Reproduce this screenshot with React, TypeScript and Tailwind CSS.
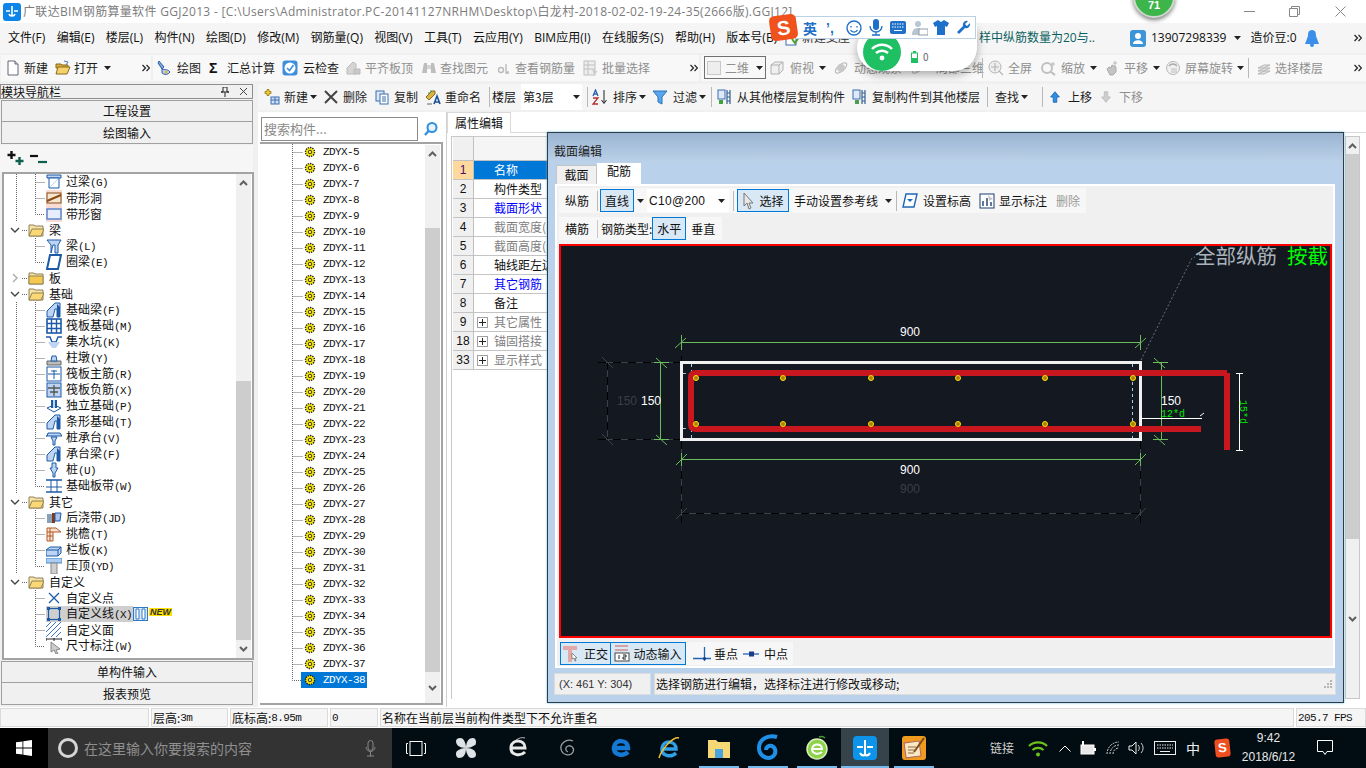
import React from 'react';

type Kids = { children?: React.ReactNode; className?: string };

const Mono = ({ children }: Kids) => (
  <span className="font-['Liberation_Mono',monospace] text-[11px] tracking-[-0.6px]">{children}</span>
);

const Caret = ({ className = '' }: { className?: string }) => (
  <svg width="7" height="4" viewBox="0 0 7 4" className={`shrink-0 ${className}`}>
    <path d="M0 0h7L3.5 4z" fill="#222" />
  </svg>
);

const More = ({ className = '' }: { className?: string }) => (
  <svg width="8" height="8" viewBox="0 0 8 8" className={`shrink-0 ${className}`}>
    <path d="M0.5 1l3 3-3 3M4.5 1l3 3-3 3" fill="none" stroke="#222" strokeWidth="1.2" />
  </svg>
);

const Sep = ({ className = '' }: { className?: string }) => (
  <div className={`w-px h-[20px] bg-[#b8b8b8] shrink-0 ${className}`} />
);

// small toolbar icons, 16 box
const Ic = ({ children, size = 16, className = '' }: Kids & { size?: number }) => (
  <svg width={size} height={size} viewBox="0 0 16 16" className={`shrink-0 ${className}`}>
    {children}
  </svg>
);

const Doc = () => (
  <Ic><path d="M3 1h7l3 3v11H3z" fill="#fff" stroke="#667" /><path d="M10 1v3h3" fill="#dde" stroke="#667" /></Ic>
);
const Open = () => (
  <Ic><path d="M1 4h5l1 1h6v3H1z" fill="#d9a93c" stroke="#8a6a1a" /><path d="M3 7h12l-3 7H1z" fill="#f5d26b" stroke="#8a6a1a" /><path d="M9 1l4 1-2 3" fill="none" stroke="#4a7ab8" /></Ic>
);
const Pencil = () => (
  <Ic><path d="M3 1l5 6-2 2-4-6z" fill="#7fa6d9" stroke="#2d5ea8" /><path d="M6 9c3 1 6 0 8 3-2 3-6 3-8 1z" fill="#b9cff0" stroke="#2d5ea8" /><circle cx="10" cy="12" r="1.5" fill="#e8b33c" /></Ic>
);
const CloudChk = () => (
  <Ic><rect x="0.5" y="0.5" width="15" height="15" rx="3" fill="#3d8fdc" /><circle cx="8" cy="8" r="5.5" fill="#fff" /><path d="M5 8l2.5 2.5L11.5 5" fill="none" stroke="#3d8fdc" strokeWidth="1.6" /></Ic>
);
const GrayAlign = () => (
  <Ic><path d="M1 14V8l6-6 3 2v10z" fill="#d5d5d5" stroke="#bbb" /><path d="M8 9h6v5H8z" fill="#c8c8c8" stroke="#bbb" /></Ic>
);
const Binoc = () => (
  <Ic><path d="M3 3h3v10H1zM10 3h3l2 10h-5z" fill="#bdbdbd" /><rect x="6" y="5" width="4" height="4" fill="#d5d5d5" /></Ic>
);
const RebarGlass = () => (
  <Ic><circle cx="5" cy="10" r="2.5" fill="none" stroke="#bbb" strokeWidth="1.4" /><path d="M10 4v9h3M10 13a2 2 0 002-2" fill="none" stroke="#bbb" strokeWidth="1.4" /></Ic>
);
const Batch = () => (
  <Ic><rect x="1" y="1" width="11" height="14" fill="#eee" stroke="#c0c0c0" /><path d="M1 5h11M1 9h11M5 1v14" stroke="#c0c0c0" /><path d="M9 9l6 3-3 1-1 2z" fill="#ccc" /></Ic>
);
const Cube = () => (
  <Ic><path d="M2 5l4-3h8v8l-4 4H2z" fill="#f0f0f0" stroke="#b0b0b0" /><path d="M2 5h8v9M10 5l4-3" fill="none" stroke="#b0b0b0" /></Ic>
);
const Orbit = () => (
  <Ic><ellipse cx="8" cy="8" rx="7" ry="3" fill="none" stroke="#bbb" strokeWidth="1.3" transform="rotate(-40 8 8)" /><circle cx="8" cy="8" r="4" fill="#c9c9c9" /></Ic>
);
const ZoomIc = () => (
  <Ic><circle cx="7" cy="7" r="6" fill="#eee" stroke="#b5b5b5" /><path d="M7 3v8M3 7h8M11 11l4 4" stroke="#b5b5b5" strokeWidth="1.2" /></Ic>
);
const Zoom2 = () => (
  <Ic><circle cx="6" cy="8" r="5" fill="none" stroke="#c0c0c0" strokeWidth="2" /><path d="M10 12l4 3" stroke="#bbb" strokeWidth="2" /><path d="M12 2v4M10 4h4" stroke="#bbb" /></Ic>
);
const Hand = () => (
  <Ic><path d="M3 9l2-2 2 1 1-3 4 2v5l-3 3H6z" fill="#c4c4c4" stroke="#aaa" /><path d="M11 1v5M9 3h4" stroke="#bbb" /></Ic>
);
const Rotate = () => (
  <Ic><circle cx="8" cy="8" r="6.5" fill="#f0f0f0" stroke="#b8b8b8" /><path d="M4 6a5 5 0 018 0" fill="none" stroke="#aaa" strokeWidth="1.4" /><rect x="6" y="8" width="6" height="5" fill="#d8d8d8" /></Ic>
);
const Floors = () => (
  <Ic><path d="M2 8l6-3h6l-6 3zM2 11l6-3h6l-6 3zM2 14l6-3h6l-6 3z" fill="#e4e4e4" stroke="#b5b5b5" /></Ic>
);
const NewIc = () => (
  <Ic><path d="M3 0.5h2v2h2v2H5v2H3v-2H1v-2h2z" fill="#f0cf4a" stroke="#a88a1a" /><rect x="7" y="8" width="8" height="7" fill="#cfe0f5" stroke="#3a6fb0" /><path d="M7 11h8M11 8v7" stroke="#3a6fb0" /></Ic>
);
const Copy = () => (
  <Ic><rect x="2" y="2" width="8" height="10" fill="#dbe7f7" stroke="#3a6fb0" /><rect x="6" y="5" width="8" height="10" fill="#fff" stroke="#3a6fb0" /><path d="M8 8h4M8 10h4M8 12h4" stroke="#3a6fb0" /></Ic>
);
const Rename = () => (
  <Ic><path d="M1 8l6-6h3v3l-6 6z" fill="#d9b347" stroke="#866a16" /><path d="M3 4h2M5 2h2" stroke="#3a8f3a" /><path d="M9 15l3-8 3 8M10 13h4" fill="none" stroke="#1c4f9c" strokeWidth="1.6" /><path d="M2 15h5" stroke="#666" /></Ic>
);
const SortIc = () => (
  <Ic><path d="M1 7l2.5-6L6 7M2 5h3" fill="none" stroke="#2a5fb0" strokeWidth="1.3" /><path d="M1 9h5l-5 6h5" fill="none" stroke="#b03030" strokeWidth="1.3" /><path d="M12 1v13M9.5 11l2.5 3.5 2.5-3.5" fill="none" stroke="#222" /></Ic>
);
const Funnel = () => (
  <Ic><path d="M1 2h14L10 8v7l-4-2V8z" fill="#57a5ea" stroke="#2b74bd" /></Ic>
);
const FloorCopy = ({ green }: { green?: boolean }) => (
  <Ic>
    <rect x="1" y="1" width="7" height="9" fill="#dfe9f7" stroke="#3a6fb0" />
    <path d="M10 1v14M13 1v14M10 4h3M10 8h3M10 12h3" stroke="#35618f" strokeWidth="1.2" />
    <rect x={green ? 2 : 3} y="11" width="4" height="4" fill={green ? '#3da33d' : '#4c9f4c'} />
  </Ic>
);
const ArrowUp = ({ c, s, down }: { c: string; s: string; down?: boolean }) => (
  <Ic size={14}><path d={down ? 'M8 14l5-6h-3V2H6v6H3z' : 'M8 2l5 6h-3v6H6V8H3z'} fill={c} stroke={s} /></Ic>
);

const Btn = ({ w, icon, label, gray, dd, gap = 'ml-[5px]' }: { w: string; icon?: React.ReactNode; label: string; gray?: boolean; dd?: string; gap?: string }) => (
  <div className={`flex items-center shrink-0 ${w}`}>
    {icon}
    <span className={`${gap} whitespace-nowrap ${gray ? 'text-[#8f8f8f]' : 'text-[#1c1c1c]'}`}>{label}</span>
    {dd && <Caret className={dd} />}
  </div>
);

// ---- connectors and tree icons
const Conn = ({ trunk, last }: { trunk?: boolean; last?: boolean }) => (
  <svg width="42" height="16" className="shrink-0">
    {trunk && <path d="M12.5 0v16" stroke="#666" strokeDasharray="1 1" />}
    <path d={last ? 'M31.5 0v8.5H41' : 'M31.5 0v16M31.5 8.5H41'} fill="none" stroke="#666" strokeDasharray="1 1" />
  </svg>
);

const TreeIc = ({ k }: { k: string }) => {
  const b = '#1c5aa8';
  const l = '#bcd4f2';
  switch (k) {
    case 'gl':
      return <Ic><path d="M1 1h14v3H1z" fill={l} stroke={b} /><path d="M3 4h10v10H3z" fill="#fff" stroke={b} /><path d="M4 13l8-8" stroke={l} /></Ic>;
    case 'dong':
      return <Ic><rect x="0" y="0" width="16" height="16" fill="#f8dcd4" /><rect x="1" y="3" width="14" height="10" fill="#f6e5cf" stroke="#8a4a16" /><path d="M1 11l14-6" stroke="#8a4a16" strokeWidth="2" /></Ic>;
    case 'chuang':
      return <Ic><rect x="0" y="0" width="16" height="16" fill="#f8dcd4" /><rect x="1" y="3" width="14" height="10" fill="#e6eefb" stroke="#5c84cc" strokeWidth="1.5" /></Ic>;
    case 'liang':
      return <Ic><path d="M1 2h14l-3 5v8H9V7H7L5 15V7z" fill={l} stroke={b} /></Ic>;
    case 'quan':
      return <Ic><path d="M4 1h11l-3 14H1z" fill="#fff" stroke={b} strokeWidth="2" /></Ic>;
    case 'jcl':
      return <Ic><path d="M1 15V9l8-8h5v14h-3V7H9l-2 8z" fill={l} stroke={b} /><path d="M11 2l3 3v10h-3z" fill={b} /></Ic>;
    case 'fb':
      return <Ic><rect x="1" y="1" width="14" height="14" fill="#fff" stroke={b} strokeWidth="1.6" /><path d="M1 5.5h14M1 10.5h14M5.5 1v14M10.5 1v14" stroke={b} strokeWidth="1.4" /></Ic>;
    case 'jsk':
      return <Ic><path d="M0 3h4l2 5h4l2-5h4" fill="none" stroke={b} strokeWidth="1.4" /><path d="M2 8l4 6h4l4-6" fill={l} /></Ic>;
    case 'zd':
      return <Ic><path d="M1 11h14v4H1z" fill="#bbb" stroke="#666" /><path d="M5 11l1-5h4l1 5z" fill={l} stroke={b} /></Ic>;
    case 'zj':
      return <Ic><rect x="1" y="1" width="14" height="14" fill="#fff" stroke={b} /><path d="M2 8h12M8 4v9M5 5h6" stroke={b} /></Ic>;
    case 'fj':
      return <Ic><rect x="1" y="1" width="14" height="14" fill={l} stroke={b} /><path d="M2 6h12M8 3v11M4 10h8" stroke="#555" strokeWidth="1.3" /></Ic>;
    case 'dl':
      return <Ic><path d="M1 10l7-3 7 3-7 4z" fill="#fff" stroke={b} /><path d="M5 2h6v8H5z" fill={b} /><path d="M7 2h2v8H7z" fill={l} /></Ic>;
    case 'cd':
      return <Ic><path d="M0 6h1l1-3h12l2 3H0z" fill={l} stroke={b} /><path d="M5 7h6l-2 4v4H7v-4z" fill={l} stroke={b} /></Ic>;
    case 'zh':
      return <Ic><path d="M6 1h4v5h2l-3 5v4H7v-4L4 6h2z" fill={l} stroke={b} /></Ic>;
    case 'bd':
      return <Ic><path d="M0 2h16M0 14h16" stroke={b} strokeWidth="1.5" /><path d="M5 2v12M11 2v12M0 9h16" stroke={b} /></Ic>;
    case 'hjd':
      return <Ic><path d="M1 4h5v9H1z" fill="#8a9fb8" /><path d="M6 3h3v10H6z" fill="#8a3a12" /><path d="M9 3h6l-1 8H9z" fill="#a9c4ee" stroke={b} /></Ic>;
    case 'ty':
      return <Ic><path d="M1 2h9l5 4H7v9H1z" fill="#f9e0cf" stroke="#b05a28" /><path d="M1 6h6M1 10h6M4 2v13" stroke="#b05a28" /></Ic>;
    case 'lb':
      return <Ic><path d="M0 8l4-3h11v6l-3 3H0z" fill={l} stroke={b} /><path d="M0 8h12v6M12 8l3-3" fill="none" stroke={b} /></Ic>;
    case 'yd':
      return <Ic><rect x="0" y="0" width="16" height="5" fill="#a9cdf3" stroke="#4a88cf" /><rect x="5" y="5" width="6" height="11" fill="#cfcfcf" stroke="#888" /></Ic>;
    case 'pt':
      return <Ic><path d="M3 3l10 10M13 3L3 13" stroke={b} strokeWidth="1.3" /></Ic>;
    case 'xian':
      return <Ic><rect x="2.5" y="2.5" width="11" height="11" fill="none" stroke={b} strokeWidth="1.2" /><path d="M1 1h3v3H1zM12 1h3v3h-3zM1 12h3v3H1zM12 12h3v3h-3z" fill={b} /></Ic>;
    case 'mian':
      return <Ic><path d="M0 5l5-5M0 10L10 0M0 15L15 0M5 15L15 5M10 15l5-5" stroke="#3f76c4" /></Ic>;
    case 'bz':
      return <Ic><path d="M0 1h16M0 0v3M8 0v3M16 0v3" stroke="#222" /><path d="M5 4l9 7-4 1 2 4-2 0-2-4-3 2z" fill="#ccc" stroke="#888" /></Ic>;
    default:
      return <Ic />;
  }
};

const Folder = ({ open }: { open?: boolean }) => (
  <svg width="16" height="16" viewBox="0 0 16 16" className="shrink-0">
    <path d="M1 3h5l1 1h8v10H1z" fill="#f6e3a6" stroke="#8f8358" />
    {open ? <path d="M4 7h12l-3 7H1z" fill="#fbd776" stroke="#8f8358" /> : <path d="M1 6h14v8H1z" fill="#f5c94f" stroke="#8f8358" />}
  </svg>
);

const leftRows: { t: string; c?: string; k?: string; trunk?: boolean; last?: boolean; group?: 'open' | 'closed'; sel?: boolean }[] = [
  { t: '过梁', c: '(G)', k: 'gl', trunk: true },
  { t: '带形洞', k: 'dong', trunk: true },
  { t: '带形窗', k: 'chuang', trunk: true, last: true },
  { t: '梁', group: 'open' },
  { t: '梁', c: '(L)', k: 'liang' },
  { t: '圈梁', c: '(E)', k: 'quan', last: true },
  { t: '板', group: 'closed' },
  { t: '基础', group: 'open' },
  { t: '基础梁', c: '(F)', k: 'jcl', trunk: true },
  { t: '筏板基础', c: '(M)', k: 'fb', trunk: true },
  { t: '集水坑', c: '(K)', k: 'jsk', trunk: true },
  { t: '柱墩', c: '(Y)', k: 'zd', trunk: true },
  { t: '筏板主筋', c: '(R)', k: 'zj', trunk: true },
  { t: '筏板负筋', c: '(X)', k: 'fj', trunk: true },
  { t: '独立基础', c: '(P)', k: 'dl', trunk: true },
  { t: '条形基础', c: '(T)', k: 'jcl', trunk: true },
  { t: '桩承台', c: '(V)', k: 'cd', trunk: true },
  { t: '承台梁', c: '(F)', k: 'jcl', trunk: true },
  { t: '桩', c: '(U)', k: 'zh', trunk: true },
  { t: '基础板带', c: '(W)', k: 'bd', trunk: true, last: true },
  { t: '其它', group: 'open' },
  { t: '后浇带', c: '(JD)', k: 'hjd', trunk: true },
  { t: '挑檐', c: '(T)', k: 'ty', trunk: true },
  { t: '栏板', c: '(K)', k: 'lb', trunk: true },
  { t: '压顶', c: '(YD)', k: 'yd', trunk: true, last: true },
  { t: '自定义', group: 'open' },
  { t: '自定义点', k: 'pt' },
  { t: '自定义线', c: '(X)', k: 'xian', sel: true },
  { t: '自定义面', k: 'mian' },
  { t: '尺寸标注', c: '(W)', k: 'bz', last: true },
];

const Chev = ({ up }: { up?: boolean }) => (
  <svg width="9" height="6" viewBox="0 0 9 6">
    <path d={up ? 'M1 5l3.5-3.5L8 5' : 'M1 1l3.5 3.5L8 1'} fill="none" stroke="#606060" strokeWidth="2" />
  </svg>
);

const Scroll = ({ top, thumb, className = '' }: { top: string; thumb: string; className?: string }) => (
  <div className={`w-[15px] shrink-0 bg-[#f0f0f0] flex flex-col ${className}`}>
    <div className="h-[17px] flex items-center justify-center shrink-0"><Chev up /></div>
    <div className={`shrink-0 ${top}`} />
    <div className={`shrink-0 bg-[#cdcdcd] ${thumb}`} />
    <div className="flex-1 flex items-center justify-center"><Chev /></div>
  </div>
);

const LeftTree = () => (
  <div className="h-[488px] ml-[2px] mr-[4px] border-2 border-[#a3a3a3] bg-white flex overflow-hidden">
    <div className="flex-1 pt-0">
      {leftRows.map((r) => (
        <div key={r.t + (r.c ?? '') + (r.k ?? '')} className="h-4 flex items-center whitespace-nowrap text-[#111]">
          {r.group ? (
            <>
              <svg width="24" height="16" className="shrink-0">
                <path d="M18 8.5h6" stroke="#666" strokeDasharray="1 1" />
                {r.group === 'open'
                  ? <path d="M7 6l4 4 4-4" fill="none" stroke="#444" strokeWidth="1.4" />
                  : <path d="M9 4l4 4-4 4" fill="none" stroke="#aaa" strokeWidth="1.4" />}
              </svg>
              <Folder open={r.group === 'open'} />
              <span className="ml-[5px]">{r.t}</span>
            </>
          ) : (
            <>
              <Conn trunk={r.trunk} last={r.last} />
              <div className={`flex items-center h-4 ${r.sel ? 'bg-[#cfcfcf] pr-[1px]' : ''}`}>
                <TreeIc k={r.k as string} />
                <span className="ml-[4px]">{r.t}{r.c && <Mono>{r.c}</Mono>}</span>
              </div>
              {r.sel && (
                <>
                  <svg width="15" height="14" viewBox="0 0 15 14" className="shrink-0">
                    <rect x="0.5" y="0.5" width="14" height="13" fill="#dcebfb" stroke="#2f78c8" />
                    <path d="M3 2h3v10H3zM9 2h3v10H9z" fill="#fff" stroke="#2f78c8" />
                  </svg>
                  <span className="ml-[1px] -mt-[5px] px-[1px] bg-[#ffe100] text-[9px] leading-[8px] font-bold text-[#333] italic font-['Liberation_Sans',sans-serif]">NEW</span>
                </>
              )}
            </>
          )}
        </div>
      ))}
    </div>
    <Scroll className="mr-[1px]" top="h-[190px]" thumb="h-[259px]" />
  </div>
);

const Panel = ({ children, className = '' }: Kids) => (
  <div className={`ml-[1px] mr-[5px] flex items-center justify-center bg-[#f0f0f0] border border-[#a0a0a0] ${className}`}>{children}</div>
);

const LeftCol = () => (
  <div className="w-[258px] shrink-0 flex flex-col pt-[2px] bg-[#f0f0f0]">
    <div className="h-[15px] mr-[5px] border border-[#8e8e8e] flex items-center justify-between pr-[4px] text-[12px] leading-[14px]">
      <span>模块导航栏</span>
      <div className="flex items-center gap-[10px]">
        <svg width="8" height="10" viewBox="0 0 8 10"><path d="M2 0h4v5h2H0h2zM4 5v5" fill="none" stroke="#222" /></svg>
        <svg width="9" height="9" viewBox="0 0 9 9"><path d="M1 1l7 7M8 1l-7 7" stroke="#444" /></svg>
      </div>
    </div>
    <Panel className="h-[22px] mt-[1px]">工程设置</Panel>
    <Panel className="h-[22px] border-t-0">绘图输入</Panel>
    <div className="h-[27px] mr-[5px] mt-[1px] flex items-center pl-[7px] gap-[6px] bg-[#f6f6f6]">
      <svg width="17" height="15" viewBox="0 0 17 15"><path d="M4.500 0v8M0.500 4h8" stroke="#111" strokeWidth="2.400" /><path d="M12.500 6v8M8.500 10h8" stroke="#0d5f4f" strokeWidth="2.400" /></svg>
      <svg width="17" height="12" viewBox="0 0 17 12"><path d="M0 3h8" stroke="#111" strokeWidth="2.200" /><path d="M8 9h9" stroke="#0d5f4f" strokeWidth="2.200" /></svg>
    </div>
    <LeftTree />
    <Panel className="h-[22px] mt-[1px]">单构件输入</Panel>
    <Panel className="h-[22px] border-t-0">报表预览</Panel>
  </div>
);

const Gear = () => (
  <svg width="12" height="12" viewBox="0 0 12 12" className="shrink-0">
    <circle cx="6" cy="6" r="4.5" fill="#ffee00" stroke="#222" strokeWidth="1.4" strokeDasharray="1.4 0.9" />
    <circle cx="6" cy="6" r="1.8" fill="none" stroke="#333" />
  </svg>
);

const zdyx = Array.from({ length: 34 }, (_, i) => i + 5);

const MidTree = () => (
  <div className="w-[186px] shrink-0 flex flex-col bg-white">
    <div className="h-[30px] pt-[5px] flex items-start">
      <div className="w-[157px] h-[24px] ml-[1px] border border-[#8c8c8c] bg-white flex items-center pl-[2px] text-[13px] text-[#8a8a8a]">搜索构件...</div>
      <svg width="16" height="16" viewBox="0 0 16 16" className="ml-[5px] mt-[4px]"><circle cx="9" cy="6.5" r="4.5" fill="#e6f2fd" stroke="#2f8fe0" strokeWidth="2" /><path d="M5.5 10L2 14" stroke="#2f8fe0" strokeWidth="2.4" /></svg>
    </div>
    <div className="h-[563px] border-t-2 border-r-2 border-b-2 border-[#a3a3a3] border-l-0 flex overflow-hidden mr-[3px]">
      <div className="flex-1 overflow-hidden">
        {zdyx.map((n) => (
          <div key={n} className="h-4 flex items-center pl-[32px]">
            <svg width="12" height="16" className="shrink-0"><path d={n === 38 ? 'M0.5 0v8.5H11' : 'M0.5 0v16M0.5 8.5H11'} fill="none" stroke="#666" strokeDasharray="1 1" /></svg>
            <div className={`flex items-center h-4 ${n === 38 ? 'bg-[#0078d7] text-white pr-[2px] -ml-[3px] pl-[3px]' : 'text-[#111]'}`}>
              <Gear />
              <span className="ml-[7px] font-['Liberation_Mono',monospace] text-[11px] tracking-[-0.6px]">ZDYX-{n}</span>
            </div>
          </div>
        ))}
      </div>
      <Scroll className="mt-[1px] mr-[1px]" top="h-[66px]" thumb="h-[444px]" />
    </div>
  </div>
);

const propRows: { n: number; t: string; c?: string; plus?: boolean; sel?: boolean }[] = [
  { n: 1, t: '名称', c: 'text-white', sel: true },
  { n: 2, t: '构件类型', c: 'text-[#111]' },
  { n: 3, t: '截面形状', c: 'text-[#0000ff]' },
  { n: 4, t: '截面宽度(mm)', c: 'text-[#808080]' },
  { n: 5, t: '截面高度(mm)', c: 'text-[#808080]' },
  { n: 6, t: '轴线距左边线距离', c: 'text-[#111]' },
  { n: 7, t: '其它钢筋', c: 'text-[#0000ff]' },
  { n: 8, t: '备注', c: 'text-[#111]' },
  { n: 9, t: '其它属性', c: 'text-[#808080]', plus: true },
  { n: 18, t: '锚固搭接', c: 'text-[#808080]', plus: true },
  { n: 33, t: '显示样式', c: 'text-[#808080]', plus: true },
];

const PropTable = () => (
  <div className="flex-1 flex flex-col bg-white">
    <div className="h-[21px] flex items-end shrink-0 border-b border-[#d9d9d9]">
      <div className="w-[64px] h-[21px] bg-white border border-b-0 border-[#d9d9d9] flex items-center justify-center text-[12px] -mb-px">属性编辑</div>
    </div>
    <div className="flex-1 flex pt-[3px] pl-[4px] pb-[8px]">
      <div className="flex-1 border border-[#c8c8c8] border-b-0 pl-px overflow-hidden">
        <div className="h-[24px] flex border-b border-[#c0c0c0]">
          <div className="w-[21px] bg-[#f0f0f0] border-r border-[#c0c0c0]" />
          <div className="flex-1 bg-[#f5f5f5]" />
        </div>
        {propRows.map((r) => (
          <div key={r.n} className="h-[19px] flex border-b border-[#c4c4c4] leading-[18px]">
            <div className={`w-[21px] shrink-0 text-center border-r border-[#c0c0c0] font-['Liberation_Sans',sans-serif] ${r.sel ? 'bg-[#ffd89e] text-[#4a0f6a]' : 'bg-[#f0f0f0] text-[#111]'}`}>{r.n}</div>
            <div className={`flex-1 flex items-center ${r.sel ? 'bg-[#0078d7]' : 'bg-white'} ${r.plus ? 'pl-[3px]' : 'pl-[20px]'} ${r.c}`}>
              {r.plus && (
                <svg width="11" height="11" viewBox="0 0 11 11" className="mr-[6px] shrink-0"><rect x="0.5" y="0.5" width="10" height="10" fill="#fff" stroke="#a0a0a0" /><path d="M2 5.5h7M5.5 2v7" stroke="#222" /></svg>
              )}
              {r.t}
            </div>
          </div>
        ))}
      </div>
      <div className="w-[15px] ml-[4px] mr-[6px] border border-[#c8c8c8] flex">
        <Scroll className="flex-1" top="h-0" thumb="h-[385px]" />
      </div>
    </div>
  </div>
);

// ---- drawing canvas
const Dash = ({ d, c = '#3c424c' }: { d: string; c?: string }) => (
  <>
    <path d={d} fill="none" stroke={c} />
    <path d={d} fill="none" stroke="#000" strokeDasharray="8 7" />
  </>
);

const rebarX = [696, 783, 871, 958, 1045, 1133];

const Drawing = () => {
  const g = '#6cbb5c';
  return (
    <svg viewBox="559 244 773 394" className="w-full h-full block font-['Liberation_Sans',sans-serif]">
      {/* gray shadow dims */}
      <Dash d="M598 362.5H680M598 439.5H680M607.5 362V439" />
      <path d="M602 357l11 11M602 434l11 11" stroke="#3c424c" />
      <Dash d="M681.5 356V361M681.5 441V523M1140.5 441V523M681 513.5H1141" />
      <path d="M676 519l11-11M1135 519l11-11" stroke="#3c424c" />
      <text x="617" y="405" fontSize="12" fill="#3a3f49">150</text>
      <text x="900" y="493" fontSize="12" fill="#3a3f49">900</text>
      {/* green dims */}
      <path d={`M681 342.5H1141M681.5 335V350M675 348l11-10M1140.5 335V350M1135 348l11-10`} stroke={g} fill="none" />
      <path d={`M682 459.5H1141M681.5 453V466M676 465l11-11M1140.5 453V466M1135 465l11-11`} stroke={g} fill="none" />
      <path d={`M660.5 362V439M654 362.5H669M654 439.5H669M656 358l11 10M656 435l11 10`} stroke={g} fill="none" />
      <path d={`M1161.5 362V439M1153 362.5H1168M1153 439.5H1168M1154 358l11 10M1154 435l11 10`} stroke={g} fill="none" />
      <text x="900" y="336" fontSize="12" fill="#fff">900</text>
      <text x="900" y="474" fontSize="12" fill="#fff">900</text>
      <text x="641" y="405" fontSize="12" fill="#fff">150</text>
      <text x="1161" y="405" fontSize="12" fill="#fff">150</text>
      {/* section outline */}
      <rect x="681.5" y="362.5" width="459" height="77" fill="none" stroke="#f0f0f0" strokeWidth="3" />
      <path d="M691.5 364V373M683 373.5H691M691.5 429V439M683 428.5H691M1132.5 364V438" stroke="#a8c8e8" strokeDasharray="3 3" fill="none" />
      {/* rebar */}
      <path d="M1201 429H696Q691 429 691 424V378Q691 373 696 373H1227" fill="none" stroke="#c8171e" strokeWidth="6" />
      <rect x="1224" y="373" width="6" height="77" fill="#c8171e" />
      {rebarX.flatMap((x) => [378, 424].map((y) => (
        <g key={`${x}-${y}`}>
          <circle cx={x} cy={y} r="2.5" fill="#b07c10" stroke="#ffe600" />
        </g>
      )))}
      {/* leader to label */}
      <path d="M1141 360L1192 258L1195 257" fill="none" stroke="#6c727c" strokeDasharray="2 2" />
      <text x="1195" y="264" fontSize="20.500" fill="#a9b2bc" className="font-['Noto_Sans_CJK_SC',sans-serif]">全部纵筋</text>
      <text x="1287" y="264" fontSize="20.500" fill="#00ff00" className="font-['Noto_Sans_CJK_SC',sans-serif]">按截</text>
      {/* hook dims */}
      <path d="M1141 418.500H1202M1200 416l4-3M1141 416v5" stroke="#fff" fill="none" />
      <text x="1161" y="417" fontSize="10" fill="#00e800" className="font-['Liberation_Mono',monospace]">12*d</text>
      <path d="M1239.5 373V450M1236 373.5H1243M1236 450.5H1243" stroke="#fff" fill="none" />
      <text x="1240" y="400" fontSize="10" fill="#00e800" transform="rotate(90 1240 400)" className="font-['Liberation_Mono',monospace]">15*d</text>
    </svg>
  );
};

const BlueBtn = ({ children, className = '' }: Kids) => (
  <div className={`flex items-center justify-center border border-[#0078d7] bg-[#d9e8f5] shrink-0 ${className}`}>{children}</div>
);

const Cursor = () => (
  <svg width="12" height="18" viewBox="0 0 12 18" className="shrink-0"><path d="M1 1v13l3-3 2 6 2-1-2-5h4z" fill="#e8e8e8" stroke="#777" /></svg>
);

const Dialog = () => (
  <div className="absolute left-[547px] top-[132px] w-[797px] h-[571px] border border-[#2f3c44] bg-[#b9d1ea] flex flex-col shadow-[0_0_2px_#58b8e0]">
    <div className="h-[30px] shrink-0 bg-gradient-to-b from-[#9ab4d2] to-[#bcd2e9] flex items-center pl-[6px] pt-[6px] text-[#222]">截面编辑</div>
    <div className="h-[21px] shrink-0 flex items-end pl-[8px]">
      <div className="w-[41px] h-[19px] border border-[#c4c4c4] border-b-0 bg-[#f0f0f0] flex items-center justify-center">截面</div>
      <div className="w-[44px] h-[21px] bg-white flex items-start justify-center">配筋</div>
    </div>
    <div className="h-[484px] shrink-0 ml-[7px] w-[780px] border-2 border-white bg-[#f0f0f0] pl-[2px] flex flex-col">
      <div className="h-[25px] mt-[2px] w-[527px] bg-[#f7f7f7] flex items-center shrink-0">
        <span className="ml-[6px]">纵筋</span>
        <Sep className="ml-[8px]" />
        <BlueBtn className="ml-[2px] w-[34px] h-[23px]">直线</BlueBtn>
        <Caret className="ml-[3px]" />
        <div className="ml-[3px] w-[82px] h-[23px] bg-white flex items-center justify-between pl-[2px] pr-[2px] font-['Liberation_Sans',sans-serif] text-[12px] tracking-[0.3px]">C10@200<Caret className="mr-[2px]" /></div>
        <Sep className="ml-[4px]" />
        <BlueBtn className="ml-[3px] w-[52px] h-[23px] gap-[5px]"><Cursor />选择</BlueBtn>
        <span className="ml-[5px]">手动设置参考线</span>
        <Caret className="ml-[7px]" />
        <Sep className="ml-[4px]" />
        <svg width="16" height="15" viewBox="0 0 16 15" className="ml-[5px]"><path d="M4 1h11l-3 13H1z" fill="#fff" stroke="#1e66b8" strokeWidth="1.4" /><path d="M5 6l3 3 3-3z" fill="#1e66b8" /></svg>
        <span className="ml-[5px]">设置标高</span>
        <svg width="16" height="16" viewBox="0 0 16 16" className="ml-[8px]"><rect x="1" y="1" width="14" height="14" fill="#fff" stroke="#1e3c6e" /><path d="M4 13V8M8 13V5M12 13V9" stroke="#1e3c6e" strokeWidth="1.4" /><path d="M9 2l5 4-4 2z" fill="#c8c8c8" /></svg>
        <span className="ml-[4px]">显示标注</span>
        <span className="ml-[9px] text-[#9a9a9a]">删除</span>
      </div>
      <div className="h-[23px] mt-[4px] w-[163px] bg-[#f7f7f7] flex items-center shrink-0">
        <span className="ml-[6px]">横筋</span>
        <div className="ml-[8px] w-px h-[18px] bg-[#c8c8c8] shrink-0" />
        <span className="ml-[3px]">钢筋类型:</span>
        <BlueBtn className="ml-0 w-[34px] h-[23px]">水平</BlueBtn>
        <span className="ml-[5px]">垂直</span>
      </div>
      <div className="h-[394px] w-[773px] mt-[4px] shrink-0 border-0 bg-[#141820] outline-2 -outline-offset-2 outline-[#ff0000]">
        <Drawing />
      </div>
      <div className="h-[23px] mt-[4px] w-[233px] bg-[#f7f7f7] flex items-center shrink-0 ml-[1px]">
        <BlueBtn className="w-[51px] h-[23px] gap-[3px]">
          <svg width="18" height="17" viewBox="0 0 18 17"><path d="M0 1h14v4H9v12H5V5H0z" fill="#e3a9a9" /><path d="M9 8l5 5-2 0 1 3-1 0-1-3-2 1z" fill="#fff" stroke="#666" strokeWidth="0.7" /></svg>
          正交
        </BlueBtn>
        <BlueBtn className="w-[76px] h-[23px] gap-[3px] -ml-px">
          <svg width="16" height="17" viewBox="0 0 16 17"><path d="M1 1h13M1 5h13" stroke="#d08a8a" strokeWidth="1.4" /><rect x="1" y="8" width="14" height="8" fill="#fff" stroke="#444" /><path d="M5 10v4M9 10h3v2H9v2h3" fill="none" stroke="#222" /></svg>
          动态输入
        </BlueBtn>
        <svg width="18" height="16" viewBox="0 0 18 16" className="ml-[7px]"><path d="M11.5 1v14M0 12.5h18" stroke="#1e66b8" strokeWidth="1.3" /><circle cx="11.5" cy="12.5" r="1.6" fill="#1e3c8a" /></svg>
        <span className="ml-[3px]">垂点</span>
        <svg width="16" height="8" viewBox="0 0 16 8" className="ml-[5px]"><path d="M0 4h16" stroke="#1e66b8" strokeWidth="1.3" /><rect x="6" y="1.5" width="5" height="5" fill="#1e3c8a" /></svg>
        <span className="ml-[5px]">中点</span>
      </div>
    </div>
    <div className="h-[22px] mt-[5px] ml-[6px] flex gap-[3px] shrink-0">
      <div className="w-[97px] bg-[#f0f0f0] border border-[#dcdcdc] flex items-center pl-[4px] text-[11px] text-[#333] font-['Liberation_Sans',sans-serif]">(X: 461 Y: 304)</div>
      <div className="w-[682px] bg-[#f0f0f0] border border-[#dcdcdc] flex items-center justify-between pl-[1px] pr-[2px] text-[#111]">
        选择钢筋进行编辑，选择标注进行修改或移动;
        <svg width="11" height="11" viewBox="0 0 11 11"><path d="M8 1h2v2H8zM5 4h2v2H5zM8 4h2v2H8zM2 7h2v2H2zM5 7h2v2H5zM8 7h2v2H8z" fill="#b5b5b5" /></svg>
      </div>
    </div>
  </div>
);

const Ime = () => (
  <div className="absolute left-[770px] top-[15px] flex items-center z-20">
    <div className="w-[27px] h-[25px] rounded-[5px] bg-[#f0521e] rotate-[-8deg] flex items-center justify-center text-white text-[20px] font-bold font-['Liberation_Sans',sans-serif] z-10">S</div>
    <div className="-ml-[2px] w-[181px] h-[23px] bg-white border border-[#bcd0e4] flex items-center pl-[7px]">
      <span className="text-[14px] font-bold text-[#1e70c8]">英</span>
      <span className="ml-[9px] w-[12px] text-[14px] font-bold text-[#1e70c8] leading-[14px] font-['Liberation_Sans',sans-serif]">’,</span>
      <svg width="16" height="16" viewBox="0 0 16 16" className="ml-[8px]"><circle cx="8" cy="8" r="7" fill="none" stroke="#1e70c8" strokeWidth="1.4" /><path d="M5 6v1.5M11 6v1.5M4.5 10a4 4 0 007 0" fill="none" stroke="#1e70c8" strokeWidth="1.3" /></svg>
      <svg width="14" height="17" viewBox="0 0 14 17" className="ml-[7px]"><rect x="4" y="0" width="6" height="11" rx="3" fill="#1e70c8" /><path d="M1 7a6 6 0 0012 0M7 13v3M3 16h8" fill="none" stroke="#1e70c8" strokeWidth="1.3" /></svg>
      <svg width="16" height="13" viewBox="0 0 16 13" className="ml-[7px]"><rect width="16" height="13" rx="2" fill="#1e70c8" /><path d="M2 3h12M2 6h12" stroke="#fff" strokeDasharray="1.5 1" /><path d="M4 9.5h8" stroke="#fff" /></svg>
      <svg width="16" height="16" viewBox="0 0 16 16" className="ml-[6px]"><circle cx="6" cy="4" r="3" fill="#b9c6d2" /><path d="M0 15c0-6 3-7 6-7s4 2 4 7z" fill="#b9c6d2" /><rect x="7" y="9" width="9" height="6" fill="#fff" stroke="#8d9baa" /></svg>
      <svg width="16" height="15" viewBox="0 0 16 15" className="ml-[5px]"><path d="M5 0l3 2 3-2 5 3-2 4-2-1v9H4V6L2 7 0 3z" fill="#1e70c8" /></svg>
      <svg width="15" height="15" viewBox="0 0 15 15" className="ml-[7px]"><path d="M14 3l-3 3-2-2 3-3a4 4 0 00-5 5L1 12l2 2 6-6a4 4 0 005-5z" fill="#1e70c8" /></svg>
    </div>
  </div>
);

const WifiFloat = () => (
  <div className="absolute left-[857px] top-[25px] w-[120px] h-[46px] bg-white rounded-b-[23px] rounded-tl-[23px] shadow-[0_4px_8px_rgba(0,0,0,0.3)] flex items-center z-10 pl-[6px]">
    <div className="w-[38px] h-[38px] rounded-full bg-[#1fc063] flex items-center justify-center mt-[8px]">
      <svg width="24" height="20" viewBox="0 0 24 20"><path d="M2 7a14 14 0 0120 0M6 11a9 9 0 0112 0" fill="none" stroke="#fff" strokeWidth="2.4" /><circle cx="12" cy="16" r="2.4" fill="#fff" /></svg>
    </div>
    <svg width="7" height="12" viewBox="0 0 7 12" className="ml-[10px] mt-[18px]"><rect x="0.5" y="2" width="6" height="9.5" fill="#fff" stroke="#1fc063" /><rect x="2" y="0" width="3" height="2" fill="#1fc063" /><rect x="0.5" y="7" width="6" height="5" fill="#1fc063" /></svg>
    <span className="ml-[5px] mt-[18px] text-[10px] text-[#666]">0</span>
  </div>
);

const TitleBar = () => (
  <div className="h-[23px] shrink-0 bg-white flex items-center pl-[3px] text-[#7c7c7c]">
    <svg width="18" height="18" viewBox="0 0 18 18" className="shrink-0"><rect width="18" height="18" rx="3" fill="#0d84e8" /><path d="M9 3v10a3 3 0 01-3-2M9 13a3 3 0 003-2M3 8h4M11 8h4" fill="none" stroke="#fff" strokeWidth="1.6" /></svg>
    <span className="ml-[2px] whitespace-nowrap font-['Open_Sans','Noto_Sans_CJK_SC',sans-serif] text-[12px] tracking-[0.32px]">广联达BIM钢筋算量软件 GGJ2013 - [C:\Users\Administrator.PC-20141127NRHM\Desktop\白龙村-2018-02-02-19-24-35(2666版).GGJ12]</span>
    <div className="ml-auto flex items-center">
      <svg width="11" height="11" viewBox="0 0 11 11" className="mr-[34px]"><path d="M0 5.5h11" stroke="#888" /></svg>
      <svg width="11" height="11" viewBox="0 0 11 11" className="mr-[35px]"><path d="M0.5 2.5h8v8h-8zM2.5 2.5v-2h8v8h-2" fill="none" stroke="#888" /></svg>
      <svg width="11" height="11" viewBox="0 0 11 11" className="mr-[20px]"><path d="M0.5 0.5l10 10M10.5 0.5l-10 10" stroke="#888" /></svg>
    </div>
  </div>
);

const MenuBar = () => (
  <div className="h-[30px] shrink-0 bg-[#f5f5f5] flex items-center pl-[8px] text-[#111] font-['Open_Sans','Noto_Sans_CJK_SC',sans-serif] text-[12px]">
    <div className="flex items-center gap-[11.4px] whitespace-nowrap w-[777px] shrink-0">
      {['文件(F)', '编辑(E)', '楼层(L)', '构件(N)', '绘图(D)', '修改(M)', '钢筋量(Q)', '视图(V)', '工具(T)', '云应用(Y)', 'BIM应用(I)', '在线服务(S)', '帮助(H)', '版本号(B)'].map((m) => (
        <span key={m}>{m}</span>
      ))}
    </div>
    <div className="w-[310px] shrink-0 flex items-center justify-between text-[#0b5f62]">
      <span className="flex items-center text-[#333] whitespace-nowrap">
        <svg width="15" height="15" viewBox="0 0 15 15" className="shrink-0"><rect x="1" y="3" width="10" height="11" fill="#fff" stroke="#3a6fb0" /><path d="M7 8l3 4 4-6" fill="none" stroke="#4aa030" strokeWidth="2" /></svg>
        <span className="ml-[2px]">新建支座</span>
      </span>
      <span className="whitespace-nowrap">样中纵筋数量为20与..</span>
    </div>
    <svg width="16" height="17" viewBox="0 0 16 17" className="shrink-0 ml-[35px]"><rect width="16" height="17" rx="3" fill="#3b95d8" /><circle cx="8" cy="6" r="3" fill="#fff" /><path d="M3 14c0-5 10-5 10 0z" fill="#fff" /></svg>
    <span className="ml-[5px]">13907298339</span>
    <Caret className="ml-[8px]" />
    <span className="ml-[9px]">造价豆:0</span>
    <svg width="14" height="17" viewBox="0 0 14 17" className="ml-[8px]"><path d="M7 0c4 0 4 4 4 6l3 8H0l3-8c0-2 0-6 4-6z" fill="#3b8fe8" /><circle cx="7" cy="15" r="2" fill="#3b8fe8" /></svg>
    <More className="ml-auto mr-[4px]" />
  </div>
);

const Toolbar = () => (
  <div className="h-[29px] shrink-0 bg-[#f0f0f0] flex items-center text-[12px]">
    <div className="w-[150px] h-[26px] ml-[1px] bg-[#f8f8f8] flex items-center pl-[4px] shrink-0">
      <Btn w="w-[50px]" icon={<Doc />} label="新建" gap="ml-[3px]" />
      <Btn w="w-[66px]" icon={<Open />} label="打开" gap="ml-[3px]" dd="ml-[6px]" />
      <More className="ml-[21px]" />
    </div>
    <div className="w-[546px] h-[26px] ml-[2px] bg-[#f8f8f8] flex items-center pl-[3px] shrink-0">
      <Btn w="w-[53px]" icon={<Pencil />} label="绘图" />
      <span className="w-[18px] text-[14px] font-bold font-['Liberation_Sans',sans-serif] shrink-0">Σ</span>
      <Btn w="w-[55px]" label="汇总计算" gap="ml-0" />
      <Btn w="w-[64px]" icon={<CloudChk />} label="云检查" />
      <Btn w="w-[75px]" icon={<GrayAlign />} label="平齐板顶" gray gap="ml-[3px]" />
      <Btn w="w-[75px]" icon={<Binoc />} label="查找图元" gray gap="ml-[3px]" />
      <Btn w="w-[87px]" icon={<RebarGlass />} label="查看钢筋量" gray gap="ml-[3px]" />
      <Btn w="w-[80px]" icon={<Batch />} label="批量选择" gray gap="ml-[3px]" />
      <More className="ml-[27px]" />
    </div>
    <div className="flex-1 h-[26px] ml-[2px] bg-[#f8f8f8] flex items-center pl-[3px]">
      <div className="w-[62px] h-[23px] border border-[#707070] flex items-center pl-[2px] text-[#8f8f8f] shrink-0">
        <svg width="14" height="14" viewBox="0 0 14 14"><rect x="0.5" y="0.5" width="13" height="13" fill="#eee" stroke="#c8c8c8" /></svg>
        <span className="ml-[4px]">二维</span>
        <Caret className="ml-[7px]" />
      </div>
      <Btn w="w-[64px] ml-[3px]" icon={<Cube />} label="俯视" gray dd="ml-[5px]" />
      <Btn w="w-[77px]" icon={<Orbit />} label="动态观察" gray />
      <Btn w="w-[72px]" icon={<Orbit />} label="局部三维" gray gap="ml-[10px]" />
      <Sep />
      <Btn w="w-[53px] ml-[5px]" icon={<ZoomIc />} label="全屏" gray gap="ml-[4px]" />
      <Btn w="w-[63px]" icon={<Zoom2 />} label="缩放" gray gap="ml-[4px]" dd="ml-[5px]" />
      <Btn w="w-[61px]" icon={<Hand />} label="平移" gray gap="ml-[4px]" dd="ml-[5px]" />
      <Btn w="w-[83px]" icon={<Rotate />} label="屏幕旋转" gray gap="ml-[4px]" dd="ml-[4px]" />
      <Sep />
      <Btn w="w-[70px] ml-[7px]" icon={<Floors />} label="选择楼层" gray gap="ml-[3px]" />
      <More className="ml-auto mr-[4px]" />
    </div>
  </div>
);

const EditBar = () => (
  <div className="h-[26px] mt-[2px] shrink-0 bg-[#f5f5f5] flex items-center pl-[6px] text-[12px]">
    <Btn w="w-[60px]" icon={<NewIc />} label="新建" gap="ml-[4px]" dd="ml-[2px]" />
    <Btn w="w-[50px]" icon={<svg width="14" height="14" viewBox="0 0 14 14"><path d="M1 1l12 12M13 1L1 13" stroke="#444" strokeWidth="2" /></svg>} label="删除" gap="ml-[5px]" />
    <Btn w="w-[51px]" icon={<Copy />} label="复制" gap="ml-[4px]" />
    <Btn w="w-[64px]" icon={<Rename />} label="重命名" gap="ml-[4px]" />
    <Sep />
    <span className="ml-[2px] shrink-0">楼层</span>
    <div className="ml-[5px] w-[61px] h-[26px] bg-white flex items-center justify-between pl-[2px] pr-[2px] shrink-0">第3层<Caret /></div>
    <Sep className="ml-[5px]" />
    <Btn w="w-[60px] ml-[4px]" icon={<SortIc />} label="排序" gap="ml-[5px]" dd="ml-[2px]" />
    <Btn w="w-[59px]" icon={<Funnel />} label="过滤" dd="ml-[2px]" />
    <Sep />
    <Btn w="w-[135px] ml-[5px]" icon={<FloorCopy green />} label="从其他楼层复制构件" gap="ml-[4px]" />
    <Btn w="w-[135px]" icon={<FloorCopy />} label="复制构件到其他楼层" gap="ml-[4px]" />
    <Sep />
    <Btn w="w-[47px] ml-[7px]" label="查找" gap="ml-0" dd="ml-[2px]" />
    <Sep />
    <div className="w-[5px] shrink-0" />
    <Btn w="w-[51px]" icon={<ArrowUp c="#2f8fe0" s="#1e66b8" />} label="上移" gap="ml-[6px]" />
    <Btn w="w-[50px]" icon={<ArrowUp c="#cfcfcf" s="#bcbcbc" down />} label="下移" gray gap="ml-[6px]" />
  </div>
);

const StatusBar = () => {
  const cell = 'h-full bg-[#f5f5f5] border border-[#dadada] flex items-center pl-[1px] shrink-0 whitespace-nowrap';
  return (
    <div className="h-[21px] shrink-0 bg-white flex gap-[2px] py-px text-[12px] text-[#111]">
      <div className={`${cell} w-[149px]`} />
      <div className={`${cell} w-[77px]`}>层高:<Mono>3m</Mono></div>
      <div className={`${cell} w-[98px]`}>底标高:<Mono>8.95m</Mono></div>
      <div className={`${cell} w-[48px]`}><Mono>0</Mono></div>
      <div className={`${cell} w-[914px]`}>名称在当前层当前构件类型下不允许重名</div>
      <div className={`${cell} flex-1`}><Mono>205.7 FPS</Mono></div>
    </div>
  );
};

const TaskIcon = ({ children, active, bar }: Kids & { active?: boolean; bar?: boolean }) => (
  <div className={`w-[48px] shrink-0 h-full flex items-center justify-center relative ${active ? 'bg-[#37434a]' : ''}`}>
    {children}
    {bar && <div className={`absolute bottom-0 h-[2px] bg-[#76b9ed] ${active ? 'left-0 right-0' : 'left-[4px] right-[4px]'}`} />}
  </div>
);

const Taskbar = () => (
  <div className="h-[40px] shrink-0 bg-[#020d13] flex items-center text-white">
    <div className="w-[48px] h-full bg-black flex items-center justify-center shrink-0">
      <svg width="16" height="16" viewBox="0 0 16 16"><path d="M0 2.3l6.5-.9v6.2H0zM7.3 1.3L16 0v7.6H7.3zM0 8.4h6.5v6.2L0 13.7zM7.3 8.4H16V16l-8.7-1.2z" fill="#fff" /></svg>
    </div>
    <div className="w-[344px] h-full bg-[#333] flex items-center pl-[10px] shrink-0">
      <div className="w-[20px] h-[20px] rounded-full border-[3px] border-[#d5d5d5] shrink-0" />
      <span className="ml-[6px] text-[14px] text-[#8f8f8f] whitespace-nowrap">在这里输入你要搜索的内容</span>
      <svg width="11" height="17" viewBox="0 0 11 17" className="ml-[113px] shrink-0"><rect x="3" y="0.5" width="5" height="10" rx="2.5" fill="none" stroke="#888" /><path d="M1 7a4.5 4.5 0 009 0M5.5 12v4M2 16h7" fill="none" stroke="#888" /></svg>
    </div>
    <div className="flex h-full items-center">
      <TaskIcon>
        <svg width="20" height="15" viewBox="0 0 20 15"><rect x="4" y="0.5" width="12" height="14" fill="none" stroke="#fff" /><path d="M2 2.5H0.5v10H2M18 2.5h1.500v10H18" fill="none" stroke="#fff" /></svg>
      </TaskIcon>
      <div className="w-[2px]" />
      <TaskIcon>
        <svg width="22" height="22" viewBox="0 0 22 22"><g fill="#dde3e6"><path d="M11 11C4 11 1 8 1 4c0-3 5-4 7-2 2 3 3 5 3 9z" /><path d="M11 11c0-7 3-10 7-10 3 0 4 5 2 7-3 2-5 3-9 3z" /><path d="M11 11c7 0 10 3 10 7 0 3-5 4-7 2-2-3-3-5-3-9z" /><path d="M11 11c0 7-3 10-7 10-3 0-4-5-2-7 3-2 5-3 9-3z" /></g></svg>
      </TaskIcon>
      <div className="w-[4px]" />
      <TaskIcon>
        <svg width="22" height="24" viewBox="0 0 22 24"><path d="M3 12h15c0-9-13-9-14-1-1 8 9 10 14 5" fill="none" stroke="#e8e8e8" strokeWidth="3" /><path d="M18 2c-3-1-6 0-9 2" fill="none" stroke="#bbb" /></svg>
      </TaskIcon>
      <div className="w-[2px]" />
      <TaskIcon>
        <svg width="20" height="20" viewBox="0 0 20 20"><path d="M15 3C8 0 2 6 3 11c1 6 9 8 12 3 2-4-2-7-5-6-3 1-3 5 0 6" fill="none" stroke="#9aa0a3" strokeWidth="1.3" /></svg>
      </TaskIcon>
      <div className="w-[5px]" />
      <TaskIcon>
        <svg width="22" height="24" viewBox="0 0 22 24"><path d="M3 12h15c0-9-13-9-14-1-1 8 9 10 14 5" fill="none" stroke="#1478d4" strokeWidth="4.500" /></svg>
      </TaskIcon>
      <TaskIcon>
        <svg width="24" height="24" viewBox="0 0 24 24"><path d="M4 13h15c0-9-13-9-14-1-1 8 9 10 14 5" fill="none" stroke="#2f9fe8" strokeWidth="3.500" /><path d="M22 2c-5-2-17 10-20 20" fill="none" stroke="#f2c230" strokeWidth="1.5" /></svg>
      </TaskIcon>
      <div className="w-[2px]" />
      <TaskIcon bar>
        <svg width="22" height="20" viewBox="0 0 22 20"><path d="M0 2h8l2 2h12v16H0z" fill="#f5d776" /><rect x="7" y="11" width="8" height="9" fill="#4aa3dc" /></svg>
      </TaskIcon>
      <div className="w-px" />
      <TaskIcon bar>
        <svg width="22" height="28" viewBox="0 0 22 28"><path d="M20 3C10 0 2 6 2 14c0 7 7 12 13 9 5-3 4-9 0-11-3-1-6 1-6 4" fill="none" stroke="#1e90e8" strokeWidth="4" /></svg>
      </TaskIcon>
      <div className="w-px" />
      <TaskIcon bar>
        <svg width="22" height="26" viewBox="0 0 22 26"><circle cx="11" cy="14" r="10" fill="#8ed24a" stroke="#d8f0b8" strokeWidth="1.500" /><path d="M6 14h10c0-6-9-6-10 0 0 5 6 6 10 3" fill="none" stroke="#fff" strokeWidth="2" /><path d="M13 2c3-1 5 0 6 1" fill="none" stroke="#4a9a2a" strokeWidth="1.500" /></svg>
      </TaskIcon>
      <TaskIcon bar active>
        <svg width="24" height="24" viewBox="0 0 24 24"><rect width="24" height="24" rx="4" fill="#0d94ea" /><path d="M12 4v15a4 4 0 01-5-2M12 19a4 4 0 005-2M4 11h6M14 11h6" fill="none" stroke="#fff" strokeWidth="2" /></svg>
      </TaskIcon>
      <div className="w-px" />
      <TaskIcon bar>
        <svg width="24" height="24" viewBox="0 0 24 24"><rect width="24" height="24" rx="3" fill="#f09a1e" /><rect x="3" y="6" width="15" height="15" fill="#fbe8c2" stroke="#a66" transform="rotate(-8 10 13)" /><path d="M22 2L12 16" stroke="#7a4a1a" strokeWidth="2" /><path d="M6 11h8M6 14h8M6 17h6" stroke="#8a6a4a" /></svg>
      </TaskIcon>
    </div>
    <div className="ml-[52px] flex items-center shrink-0">
      <span className="text-[12px] text-[#d0d0d0]">链接</span>
      <svg width="20" height="17" viewBox="0 0 20 17" className="ml-[14px]"><path d="M1 6a13 13 0 0118 0M4.500 10a8 8 0 0111 0" fill="none" stroke="#6cc21c" strokeWidth="2.200" /><circle cx="10" cy="14.500" r="2" fill="#6cc21c" /></svg>
      <svg width="12" height="7" viewBox="0 0 12 7" className="ml-[11px]"><path d="M0.5 6.500L6 1l5.500 5.500" fill="none" stroke="#fff" /></svg>
      <svg width="16" height="14" viewBox="0 0 16 14" className="ml-[9px]"><rect x="1" y="4" width="13" height="9" fill="#e8e8e8" stroke="#fff" /><rect x="14" y="7" width="2" height="3" fill="#fff" /><rect x="2" y="0" width="2" height="4" fill="#fff" /></svg>
      <svg width="16" height="14" viewBox="0 0 16 14" className="ml-[10px]"><path d="M1 13a12 12 0 0112-12M4 13a9 9 0 019-9M7 13a6 6 0 016-6" fill="none" stroke="#d5d5d5" strokeDasharray="2 1" /></svg>
      <svg width="16" height="14" viewBox="0 0 16 14" className="ml-[6px]"><path d="M1 5h3l4-4v12l-4-4H1z" fill="none" stroke="#eee" /><path d="M10 4a4 4 0 010 6M13 2a7 7 0 010 10" fill="none" stroke="#ccc" /></svg>
      <svg width="22" height="14" viewBox="0 0 22 14" className="ml-[10px]"><rect x="0.5" y="0.5" width="21" height="13" fill="none" stroke="#eee" /><path d="M3 4h16M3 7h16" stroke="#eee" strokeDasharray="1.500 1" /><path d="M6 10.500h10" stroke="#eee" /></svg>
      <span className="ml-[10px] text-[14px] text-[#eee]">中</span>
      <div className="ml-[15px] w-[15px] h-[18px] rounded-[3px] bg-[#ef4f20] rotate-[-6deg] flex items-center justify-center text-[13px] font-bold font-['Liberation_Sans',sans-serif]">S</div>
    </div>
    <div className="ml-[9px] flex flex-col items-center text-[12px] leading-[19px] text-[#e8e8e8] font-['Liberation_Sans',sans-serif] shrink-0 w-[59px]">
      <span>9:42</span>
      <span className="whitespace-nowrap">2018/6/12</span>
    </div>
    <svg width="16" height="16" viewBox="0 0 16 16" className="ml-[19px] shrink-0"><path d="M0.500 0.500h15v11H10l-2 3-2-3H0.500z" fill="none" stroke="#fff" /></svg>
  </div>
);

export default function App() {
  return (
    <div className="relative w-[1366px] h-[768px] overflow-hidden flex flex-col bg-[#f0f0f0] text-[12px] leading-[16px] text-[#111] font-['Noto_Sans_CJK_SC','Liberation_Sans',sans-serif]">
      <TitleBar />
      <MenuBar />
      <Toolbar />
      <div className="h-[625px] shrink-0 flex">
        <LeftCol />
        <div className="flex-1 flex flex-col min-w-0">
          <EditBar />
          <div className="h-[2px] shrink-0 bg-[#f0f0f0]" />
          <div className="flex-1 flex min-h-0 bg-white">
            <div className="w-[2px] shrink-0 bg-white" />
            <MidTree />
            <div className="w-px shrink-0 bg-[#d0d0d0]" />
            <PropTable />
          </div>
        </div>
      </div>
      <StatusBar />
      <Taskbar />
      <Dialog />
      <WifiFloat />
      <Ime />
      {/* floating speed ball, cut by the screen edge */}
      <div className="absolute left-[1133px] -top-[24px] w-[42px] h-[42px] rounded-full bg-[#3cb54a] border-2 border-[#cfd8cf] shadow-[0_2px_4px_rgba(0,0,0,0.5)] flex items-end justify-center pb-[3px] text-white font-bold text-[11px] font-['Liberation_Sans',sans-serif] z-20">71</div>
    </div>
  );
}
